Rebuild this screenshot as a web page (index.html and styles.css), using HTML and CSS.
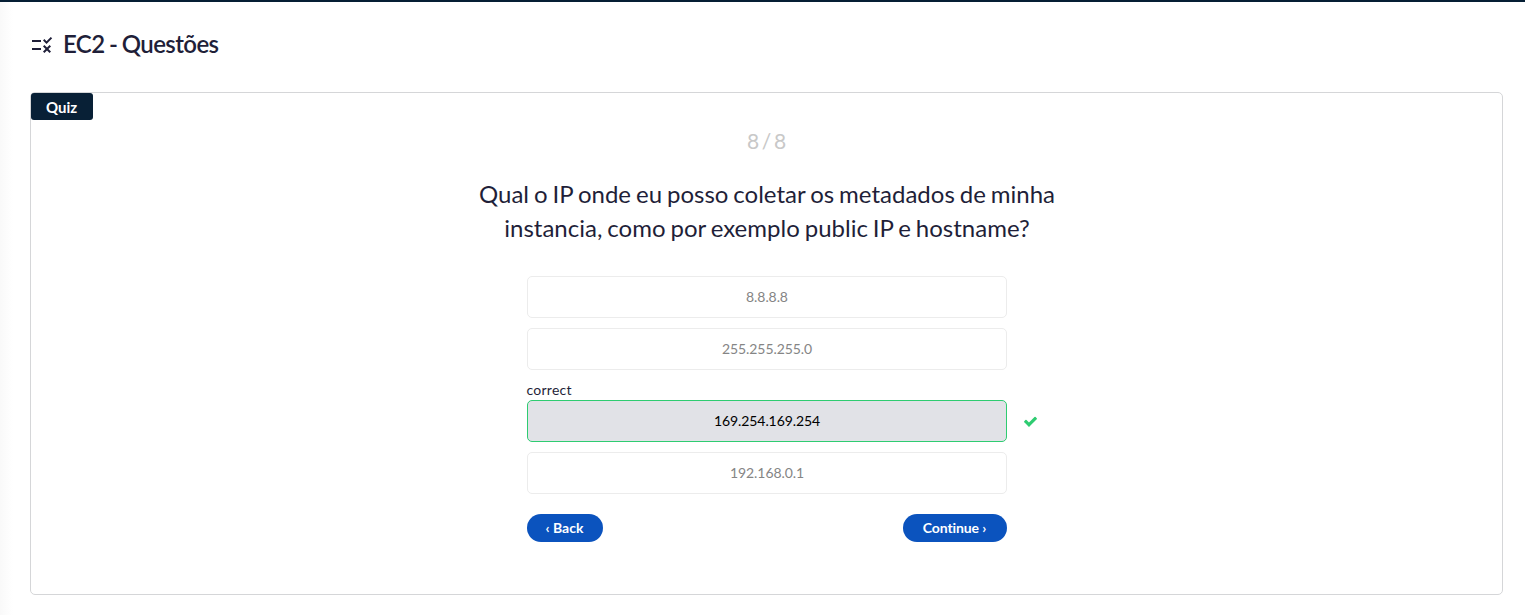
FILE: index.html
```html
<!DOCTYPE html>
<html lang="pt-BR">
<head>
<meta charset="utf-8">
<title>EC2 - Questões</title>
<link rel="stylesheet" href="styles.css">
</head>
<body>
<main class="page">
  <header class="page-header">
    <svg class="rule-icon" viewBox="0 0 24 24" aria-hidden="true"><path d="M16.54 11L13 7.46l1.41-1.41 2.12 2.12 4.24-4.24 1.41 1.41L16.54 11zM11 7H2v2h9V7zm10 6.41L19.59 12 17 14.59 14.41 12 13 13.41 15.59 16 13 18.59 14.41 20 17 17.41 19.59 20 21 18.59 18.41 16 21 13.41zM11 15H2v2h9v-2z"/></svg>
    <h1 class="title">EC2 - Questões</h1>
  </header>
  <section class="card">
    <span class="tag">Quiz</span>
    <div class="progress">8 / 8</div>
    <h2 class="question">Qual o IP onde eu posso coletar os metadados de minha instancia, como por exemplo public IP e hostname?</h2>
    <div class="answers">
      <button class="answer">8.8.8.8</button>
      <button class="answer">255.255.255.0</button>
      <div class="result">
        <span class="result-label">correct</span>
        <button class="answer answer-correct">169.254.169.254</button>
        <svg class="check" viewBox="0 0 1792 1792" aria-hidden="true"><path d="M1671 566q0 40-28 68l-724 724-136 136q-28 28-68 28t-68-28l-136-136-362-362q-28-28-28-68t28-68l136-136q28-28 68-28t68 28l294 295 656-657q28-28 68-28t68 28l136 136q28 28 28 68z"/></svg>
      </div>
      <button class="answer">192.168.0.1</button>
    </div>
    <nav class="nav">
      <button class="nav-button">‹ Back</button>
      <button class="nav-button nav-next">Continue ›</button>
    </nav>
  </section>
</main>
</body>
</html>
```
FILE: styles.css
```css
* { box-sizing: border-box; }
body {
  margin: 0;
  font-family: Lato, sans-serif;
  font-variant-ligatures: none;
  color: #1f1f39;
  background: linear-gradient(90deg, #f9f9f9, #fff 13px);
}
button { font: inherit; font-variant-ligatures: none; margin: 0; }
.page {
  height: 615px;
  padding: 28px 22px 20px 30px;
  border-top: 2px solid #051e34;
  display: flex;
  flex-direction: column;
}
.page-header {
  display: flex;
  align-items: center;
  gap: 9px;
  height: 30px;
  margin-bottom: 32px;
}
.rule-icon { width: 24px; height: 24px; fill: currentColor; }
.title {
  margin: 0;
  padding-bottom: 2px;
  font-size: 24px;
  line-height: 28px;
  font-weight: 600;
  letter-spacing: -0.6px;
  word-spacing: -0.9px;
}
.card {
  flex: 1;
  display: flex;
  flex-direction: column;
  align-items: center;
  background: #fff;
  border: 1px solid #d5d6d8;
  border-radius: 5px;
}
.tag {
  align-self: flex-start;
  width: 62px;
  height: 27px;
  padding-right: 1px;
  border-radius: 3px;
  background: #082036;
  color: #fff;
  font-size: 15px;
  line-height: 28px;
  font-weight: 700;
  text-align: center;
}
.progress {
  margin-top: 7px;
  font-size: 21px;
  line-height: 28px;
  word-spacing: -2.7px;
  color: #c8c8c8;
}
.question {
  width: 600px;
  margin: 22px 0 31px;
  padding-left: 1px;
  font-size: 24px;
  line-height: 34px;
  font-weight: 400;
  word-spacing: -1.2px;
  text-align: center;
}
.answers {
  width: 480px;
  display: flex;
  flex-direction: column;
  gap: 10px;
  font-size: 14px;
}
.answer {
  width: 100%;
  height: 42px;
  padding: 0 0 2px 1px;
  display: block;
  border: 1px solid #ececec;
  border-radius: 5px;
  background: #fff;
  color: #858585;
  letter-spacing: -0.08px;
}
.result { position: relative; }
.result-label { display: block; height: 20px; line-height: 20px; letter-spacing: 0.25px; }
.answer-correct { background: #e1e2e7; border-color: #2ecc71; color: #000; }
.check {
  position: absolute;
  left: 496px;
  bottom: 13px;
  width: 15px;
  height: 15px;
  fill: #2ecc71;
}
.nav {
  width: 480px;
  margin-top: 20px;
  display: flex;
  justify-content: space-between;
}
.nav-button {
  width: 76px;
  height: 28px;
  padding: 0 0 2px;
  border: 0;
  border-radius: 14px;
  background: #0b53be;
  color: #fff;
  font-size: 14px;
  font-weight: 700;
}
.nav-next { width: 104px; letter-spacing: -0.1px; }
```
